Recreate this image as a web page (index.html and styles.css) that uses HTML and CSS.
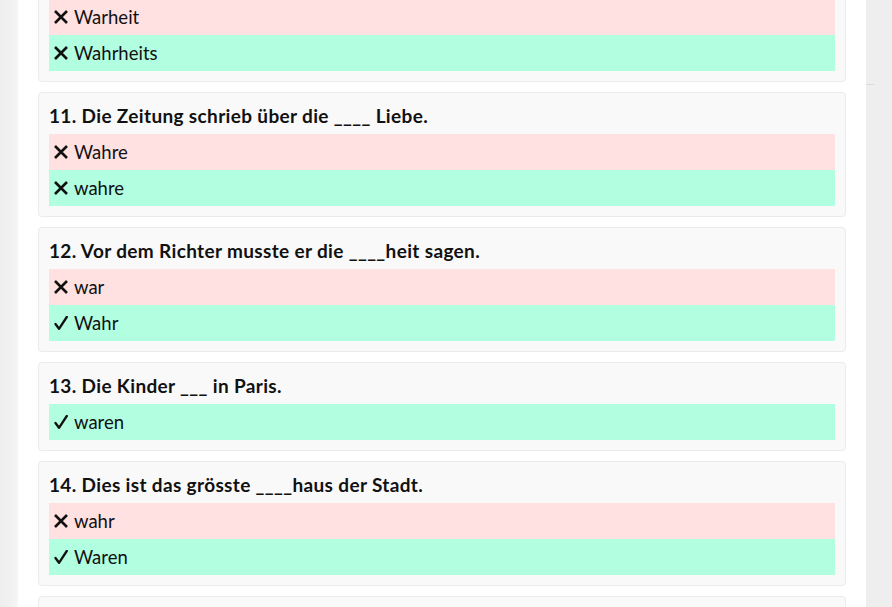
FILE: index.html
```html
<!DOCTYPE html>
<html lang="de">
<head>
<meta charset="utf-8">
<title>Quiz</title>
<link rel="stylesheet" href="styles.css">
</head>
<body>
<div class="page">
  <div class="edge-left"></div>
  <main class="panel">
    <section class="card first">
      <h3 class="q">10. Das ist die ____.</h3>
      <div class="opt wrong"><svg class="ic" viewBox="0 0 14 14"><path d="M1 1L13 13M13 1L1 13"/></svg><span>Warheit</span></div>
      <div class="opt right"><svg class="ic" viewBox="0 0 14 14"><path d="M1 1L13 13M13 1L1 13"/></svg><span>Wahrheits</span></div>
    </section>
    <section class="card">
      <h3 class="q">11. Die Zeitung schrieb über die ____ Liebe.</h3>
      <div class="opt wrong"><svg class="ic" viewBox="0 0 14 14"><path d="M1 1L13 13M13 1L1 13"/></svg><span>Wahre</span></div>
      <div class="opt right"><svg class="ic" viewBox="0 0 14 14"><path d="M1 1L13 13M13 1L1 13"/></svg><span>wahre</span></div>
    </section>
    <section class="card">
      <h3 class="q">12. Vor dem Richter musste er die ____heit sagen.</h3>
      <div class="opt wrong"><svg class="ic" viewBox="0 0 14 14"><path d="M1 1L13 13M13 1L1 13"/></svg><span>war</span></div>
      <div class="opt right"><svg class="ic chk" viewBox="0 0 14 14"><path d="M1.5 8L5 12.8L12.8 1"/></svg><span>Wahr</span></div>
    </section>
    <section class="card">
      <h3 class="q">13. Die Kinder ___ in Paris.</h3>
      <div class="opt right"><svg class="ic chk" viewBox="0 0 14 14"><path d="M1.5 8L5 12.8L12.8 1"/></svg><span>waren</span></div>
    </section>
    <section class="card">
      <h3 class="q">14. Dies ist das grösste ____haus der Stadt.</h3>
      <div class="opt wrong"><svg class="ic" viewBox="0 0 14 14"><path d="M1 1L13 13M13 1L1 13"/></svg><span>wahr</span></div>
      <div class="opt right"><svg class="ic chk" viewBox="0 0 14 14"><path d="M1.5 8L5 12.8L12.8 1"/></svg><span>Waren</span></div>
    </section>
    <section class="card">
      <h3 class="q">15. Wir ____ gestern im Kino.</h3>
      <div class="opt right"><svg class="ic chk" viewBox="0 0 14 14"><path d="M1.5 8L5 12.8L12.8 1"/></svg><span>waren</span></div>
    </section>
  </main>
  <div class="edge-right"><div class="rule"></div></div>
</div>
</body>
</html>
```
FILE: styles.css
```css
html, body {
  margin: 0;
  padding: 0;
  height: 100%;
  overflow: hidden;
}
body {
  background: #eeeeee;
  font-family: Lato, "Noto Sans", sans-serif;
  color: #111;
}
.page {
  display: flex;
  height: 607px;
  overflow: hidden;
}
.edge-left {
  width: 18px;
  flex: none;
  background: linear-gradient(to right, #eeeeee, #f1f1f1 60%, #f6f6f6);
}
.panel {
  width: 808px;
  flex: none;
  background: #fff;
  padding: 0 20px;
  display: flex;
  flex-direction: column;
  gap: 10px;
}
.edge-right {
  flex: 1;
  background: #eeeeee;
  padding-top: 84px;
}
.rule {
  width: 8px;
  height: 1px;
  background: #dcdcdc;
}
.card {
  background: #f9f9f9;
  border: 1px solid #ebebeb;
  border-radius: 4px;
  padding: 0 10px 10px;
  flex: none;
}
.card.first {
  margin-top: -43px;
}
.q {
  margin: 0;
  padding-top: 10px;
  height: 31px;
  line-height: 26px;
  font-size: 19px;
  font-weight: 700;
  letter-spacing: 0.35px;
}
.opt {
  height: 36px;
  display: flex;
  align-items: center;
  gap: 6px;
  padding-left: 5px;
  font-size: 18.5px;
}
.wrong { background: #ffe1e1; }
.right { background: #b1fee0; }
.ic {
  width: 14px;
  height: 14px;
  flex: none;
  fill: none;
  stroke: #111;
  stroke-width: 2.6;
  stroke-linecap: butt;
}
.ic.chk {
  stroke-width: 2.3;
  stroke-linecap: round;
  stroke-linejoin: round;
}
```
